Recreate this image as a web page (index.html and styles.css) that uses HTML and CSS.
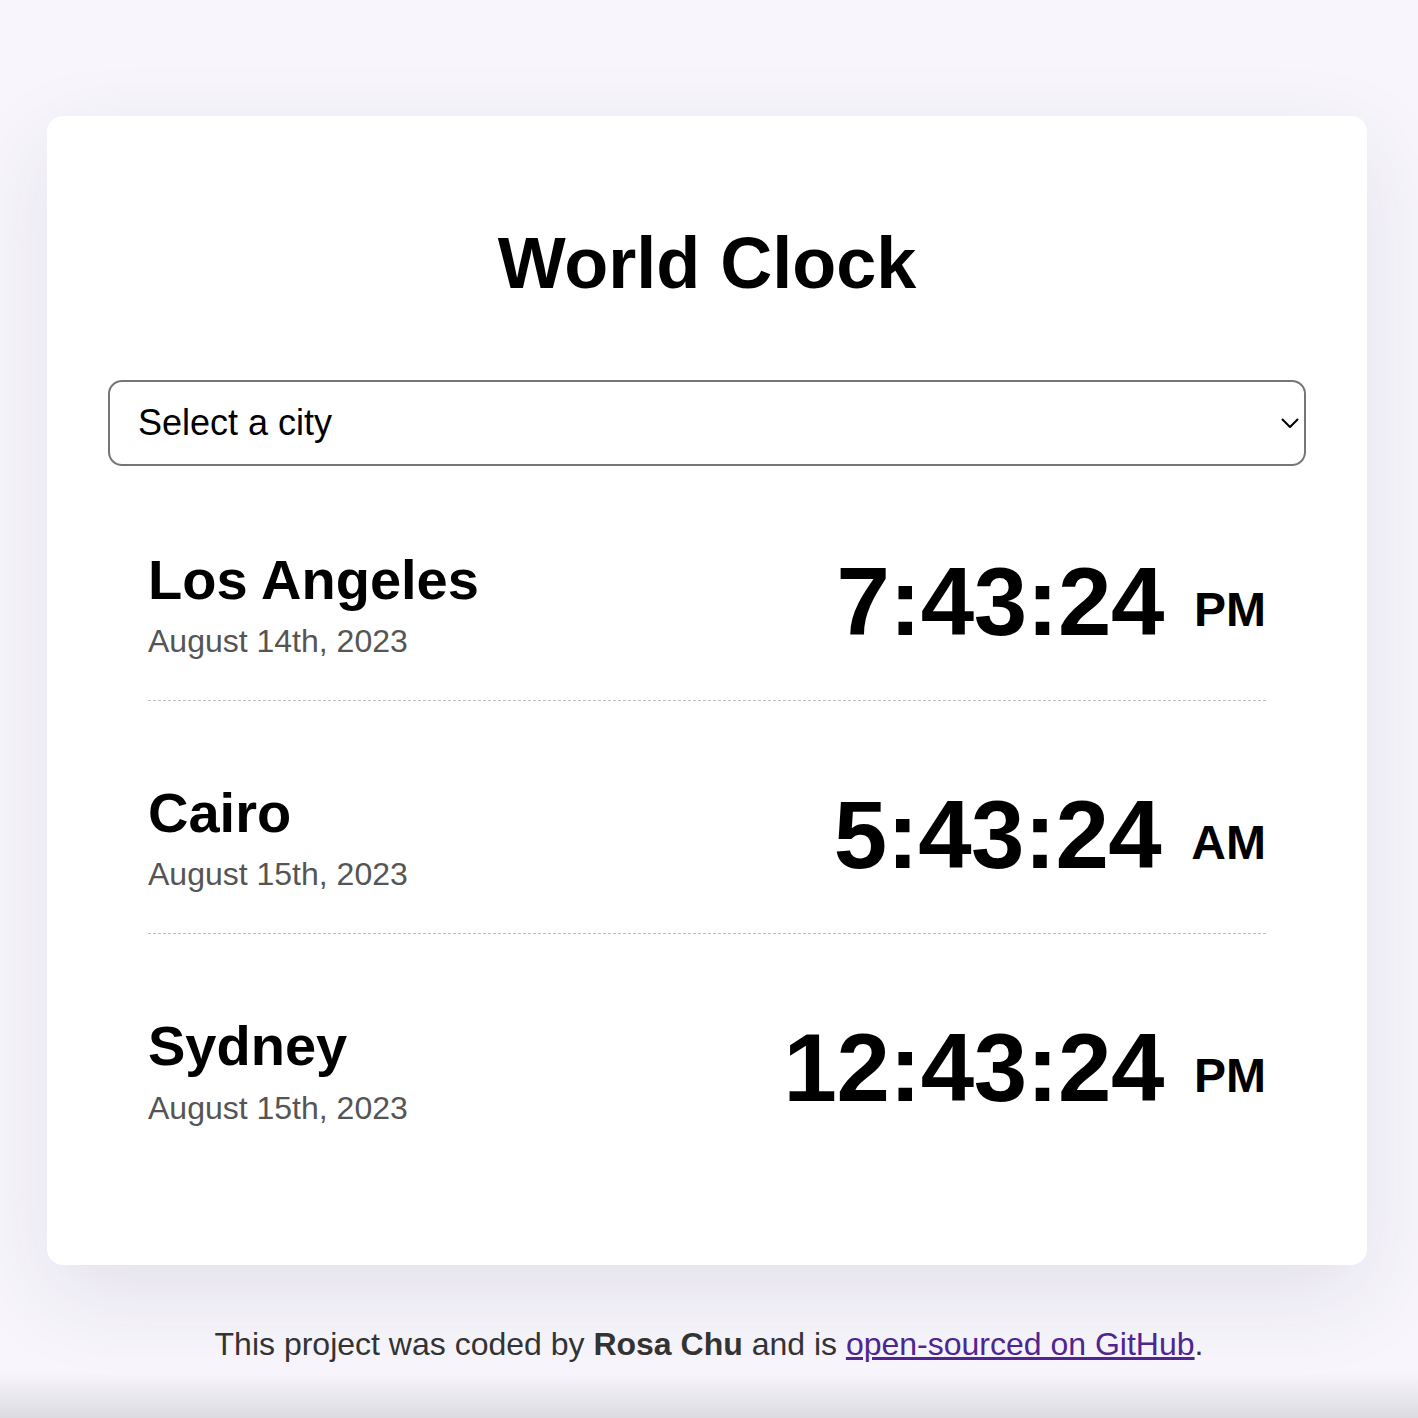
FILE: index.html
```html
<!DOCTYPE html>
<html lang="en">
<head>
<meta charset="utf-8">
<title>World Clock</title>
<link rel="stylesheet" href="styles.css">
</head>
<body>
<div class="page">
  <main class="card">
    <h1 class="title">World Clock</h1>
    <div class="select-wrap">
      <select class="city-select">
        <option>Select a city</option>
      </select>
      <svg class="chevron" width="18" height="11" viewBox="0 0 18 11" aria-hidden="true"><path d="M1.5 1.5 L9 9 L16.5 1.5" fill="none" stroke="#000" stroke-width="2" stroke-linecap="round" stroke-linejoin="round"/></svg>
    </div>
    <div class="cities">
      <div class="city">
        <div class="city-info">
          <h2 class="city-name">Los Angeles</h2>
          <div class="city-date">August 14th, 2023</div>
        </div>
        <div class="city-time">7:43:24 <small class="meridiem">PM</small></div>
      </div>
      <div class="city">
        <div class="city-info">
          <h2 class="city-name">Cairo</h2>
          <div class="city-date">August 15th, 2023</div>
        </div>
        <div class="city-time">5:43:24 <small class="meridiem">AM</small></div>
      </div>
      <div class="city">
        <div class="city-info">
          <h2 class="city-name">Sydney</h2>
          <div class="city-date">August 15th, 2023</div>
        </div>
        <div class="city-time">12:43:24 <small class="meridiem">PM</small></div>
      </div>
    </div>
  </main>
  <p class="footer">This project was coded by <strong>Rosa Chu</strong> and is <a class="footer-link" href="#">open-sourced on GitHub</a>.</p>
</div>
</body>
</html>
```
FILE: styles.css
```css
html, body {
  margin: 0;
  padding: 0;
}

body {
  font-family: "Liberation Sans", Arial, Helvetica, sans-serif;
  background-color: #f8f6fc;
  background-image: linear-gradient(to bottom, rgba(220, 219, 226, 0) 0, rgba(220, 219, 226, 0) 1372px, #dcdbe1 1418px);
  background-repeat: no-repeat;
  min-height: 1418px;
  color: #000;
}

.page {
  padding-top: 116px;
  padding-bottom: 20px;
}

.card {
  box-sizing: border-box;
  width: 1320px;
  margin-left: 47px;
  background: #fff;
  border-radius: 16px;
  padding: 106px 61px 99px;
  box-shadow: 0 30px 90px rgba(40, 30, 80, 0.10);
}

.title {
  margin: 0;
  text-align: center;
  font-size: 72px;
  line-height: 1.15;
  font-weight: 700;
}

.select-wrap {
  position: relative;
  margin-top: 75px;
}

.city-select {
  display: block;
  box-sizing: border-box;
  width: 100%;
  height: 86px;
  margin: 0;
  padding: 0 60px 0 28px;
  border: 2px solid #767676;
  border-radius: 14px;
  background: #fff;
  color: #000;
  font-family: "Liberation Sans", Arial, Helvetica, sans-serif;
  font-size: 36px;
  -webkit-appearance: none;
  appearance: none;
  outline: none;
}

.chevron {
  position: absolute;
  right: 7px;
  top: 38px;
  pointer-events: none;
}

.cities {
  margin-top: 2px;
  padding: 0 40px;
}

.city {
  display: flex;
  justify-content: space-between;
  align-items: center;
  padding: 76px 0 40px;
  border-bottom: 1px dashed #bdbdbd;
}

.city:last-child {
  border-bottom: none;
}

.city-info {
  padding-top: 4px;
}

.city-name {
  margin: 0 0 11px;
  font-size: 56px;
  line-height: 1.15;
  font-weight: 700;
}

.city-date {
  font-size: 32px;
  line-height: 1.15;
  color: #555;
}

.city-time {
  font-size: 96px;
  line-height: 1.15;
  font-weight: 700;
  letter-spacing: -0.5px;
  white-space: nowrap;
}

.meridiem {
  font-size: 48px;
  letter-spacing: 0;
  vertical-align: middle;
  margin-left: 4px;
}

.footer {
  margin: 61px 0 0;
  text-align: center;
  font-size: 32px;
  line-height: 1.15;
  color: #333;
}

.footer strong {
  font-weight: 700;
}

.footer-link {
  color: #4f2591;
}
```
